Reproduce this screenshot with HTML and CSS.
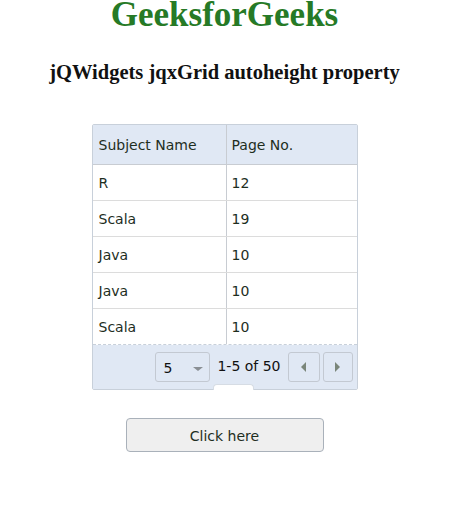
FILE: index.html
```html
<!DOCTYPE html>
<html>
<head>
<meta charset="utf-8">
<link rel="stylesheet" href="styles.css">
</head>
<body>
<div class="page">
  <h1 class="title">GeeksforGeeks</h1>
  <h3 class="subtitle">jQWidgets jqxGrid autoheight property</h3>
  <div class="grid">
    <div class="row head">
      <div class="cell c1">Subject Name</div>
      <div class="cell c2">Page No.</div>
    </div>
    <div class="row"><div class="cell c1">R</div><div class="cell c2">12</div></div>
    <div class="row"><div class="cell c1">Scala</div><div class="cell c2">19</div></div>
    <div class="row"><div class="cell c1">Java</div><div class="cell c2">10</div></div>
    <div class="row"><div class="cell c1">Java</div><div class="cell c2">10</div></div>
    <div class="row last"><div class="cell c1">Scala</div><div class="cell c2">10</div></div>
    <div class="pager">
      <div class="dropdown">
        <span>5</span>
        <span class="arrow-down"></span>
      </div>
      <div class="info">1-5 of 50</div>
      <div class="pbtn"><span class="tri-left"></span></div>
      <div class="pbtn next"><span class="tri-right"></span></div>
      <div class="tab"></div>
    </div>
  </div>
  <button class="btn">Click here</button>
</div>
</body>
</html>
```

FILE: styles.css
```css
html, body {
  margin: 0;
  padding: 0;
  background: #ffffff;
}
.page {
  width: 449px;
  display: flex;
  flex-direction: column;
  align-items: center;
}
.title {
  margin: 0;
  font-family: "Liberation Serif", "Times New Roman", serif;
  font-size: 35px;
  font-weight: bold;
  line-height: 29px;
  color: #267a26;
}
.subtitle {
  margin: 32px 0 0 0;
  font-family: "Liberation Serif", "Times New Roman", serif;
  font-size: 20.5px;
  font-weight: bold;
  line-height: 22px;
  color: #111;
}
.grid {
  margin-top: 41px;
  width: 264px;
  border: 1px solid #c8d0da;
  border-radius: 2px;
  position: relative;
  font-family: "DejaVu Sans", Verdana, sans-serif;
  font-size: 14px;
  color: #1e2e1e;
}
.row {
  display: flex;
  height: 35px;
  border-bottom: 1px solid #dcdcdc;
  background: #fff;
}
.row.head {
  height: 39px;
  background: #e0e8f4;
  border-bottom: 1px solid #c8ccd2;
}
.row.last {
  border-bottom: 1px dashed #c8d0da;
}
.cell {
  display: flex;
  align-items: center;
  padding: 0 0 0 6px;
  box-sizing: border-box;
}
.c1 {
  width: 134px;
  border-right: 1px solid #c8ccd2;
}
.c2 {
  flex: 1;
  padding-left: 5px;
}
.pager {
  height: 44px;
  background: #e0e8f4;
  display: flex;
  align-items: flex-start;
  justify-content: flex-end;
  padding: 7px 4px 0 0;
  box-sizing: border-box;
  position: relative;
}
.dropdown {
  width: 55px;
  height: 30px;
  box-sizing: border-box;
  border: 1px solid #c3c9d2;
  border-radius: 3px;
  display: flex;
  align-items: center;
  justify-content: space-between;
  padding: 2px 6px 0 7px;
  color: #111;
}
.arrow-down {
  width: 0;
  height: 0;
  border-left: 5px solid transparent;
  border-right: 5px solid transparent;
  border-top: 4px solid #8a8f94;
  margin-top: 2px;
}
.info {
  margin-left: 7px;
  height: 30px;
  line-height: 28px;
  color: #111;
}
.pbtn {
  width: 32px;
  height: 30px;
  box-sizing: border-box;
  border: 1px solid #c3c9d2;
  border-radius: 3px;
  margin-left: 7px;
  display: flex;
  align-items: center;
  justify-content: center;
}
.pbtn.next {
  width: 30px;
  margin-left: 3px;
}
.tri-left {
  width: 0;
  height: 0;
  border-top: 5px solid transparent;
  border-bottom: 5px solid transparent;
  border-right: 5px solid #7a867a;
}
.tri-right {
  width: 0;
  height: 0;
  border-top: 5px solid transparent;
  border-bottom: 5px solid transparent;
  border-left: 5px solid #7a867a;
}
.tab {
  position: absolute;
  left: 120px;
  bottom: -1px;
  width: 39px;
  height: 5px;
  background: #fff;
  border: 1px solid #d6dce4;
  border-bottom: none;
  border-radius: 4px 4px 0 0;
}
.btn {
  margin-top: 28px;
  width: 198px;
  height: 34px;
  background: #efefef;
  border: 1px solid #a9b1ba;
  border-radius: 4px;
  font-family: "DejaVu Sans", Verdana, sans-serif;
  font-size: 14px;
  color: #1e2e1e;
  padding: 1px 0 0 0;
}
```
